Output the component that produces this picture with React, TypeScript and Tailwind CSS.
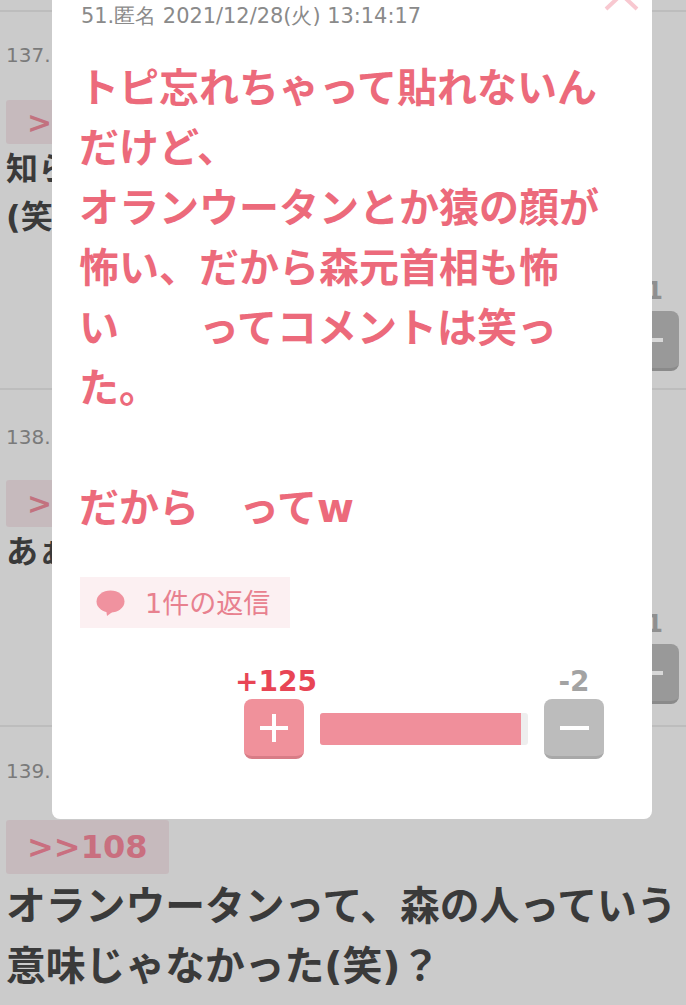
import React from "react";

const jp = "font-['DejaVu_Sans','Noto_Sans_CJK_JP','Noto_Sans_CJK_SC',sans-serif]";
const dv = "font-['DejaVu_Sans',sans-serif]";

function VoteBtn() {
  return (
    <div className="flex flex-col items-end pr-[7px]">
      <div className={`${dv} mb-[6px] mr-[16px] text-[24px] leading-[28px] font-bold text-[#8f8f8f]`}>1</div>
      <div className="w-[60px] h-[60px] rounded-[8px] bg-[#999999] border-b-[3px] border-[#8a8a8a] flex items-center justify-center">
        <div className="w-[28px] h-[4px] bg-[#d8d8d8]" />
      </div>
    </div>
  );
}

function Row137() {
  return (
    <div className="h-[378px] border-t-2 border-[#bdbdbd] mt-[10px] pt-[32px] relative">
      <div className={`${dv} pl-[6px] text-[20px] leading-[22px] text-[#7a7a7a]`}>137.</div>
      <div className="mt-[34px] ml-[6px] w-[160px] h-[44px] rounded-[3px] bg-[#c6babd] pl-[21px] flex items-center">
        <span className={`${dv} text-[30px] font-bold text-[#c2727f]`}>&gt;&gt;</span>
      </div>
      <div className={`${jp} pl-[6px] mt-[1px] text-[32px] leading-[48px] font-bold text-[#3a3a3a]`}>
        <div>知ら</div>
        <div>(笑</div>
      </div>
      <div className="mt-[36px]">
        <VoteBtn />
      </div>
    </div>
  );
}

function Row138() {
  return (
    <div className="h-[337px] border-t-2 border-[#bdbdbd] pt-[36px]">
      <div className={`${dv} pl-[6px] text-[20px] leading-[22px] text-[#7a7a7a]`}>138.</div>
      <div className="mt-[32px] ml-[6px] w-[160px] h-[47px] rounded-[3px] bg-[#c6babd] pl-[21px] flex items-center">
        <span className={`${dv} text-[30px] font-bold text-[#c2727f]`}>&gt;&gt;</span>
      </div>
      <div className={`${jp} pl-[6px] mt-[2px] text-[32px] leading-[46px] font-bold text-[#3a3a3a]`}>あぁ</div>
      <div className="mt-[35px]">
        <VoteBtn />
      </div>
    </div>
  );
}

function Row139() {
  return (
    <div className="border-t-2 border-[#bdbdbd] pt-[33px]">
      <div className={`${dv} pl-[6px] text-[20px] leading-[22px] text-[#7a7a7a]`}>139.</div>
      <div className="mt-[38px] ml-[6px] w-[163px] h-[54px] rounded-[3px] bg-[#c6babd] pl-[21px] flex items-center">
        <span className={`${dv} text-[32px] font-bold text-[#c96f7f]`}>&gt;&gt;108</span>
      </div>
      <div className={`${jp} pl-[6px] mt-[2px] text-[39.8px] leading-[60px] font-bold text-[#3a3a3a] whitespace-nowrap`}>
        <div>オランウータンって、森の人っていう</div>
        <div>意味じゃなかった(笑)？</div>
      </div>
    </div>
  );
}

function Modal() {
  const lines = [
    "トピ忘れちゃって貼れないん",
    "だけど、",
    "オランウータンとか猿の顔が",
    "怖い、だから森元首相も怖",
    "い\u3000\u3000ってコメントは笑っ",
    "た。",
    "\u00a0",
    "だから\u3000ってw",
  ];
  return (
    <div className="absolute left-[52px] top-[-20px] w-[600px] h-[839px] bg-white rounded-[8px] pl-[29px] pt-[21px]">
      <svg className="absolute left-[552px] top-[0px]" width="36" height="34" viewBox="0 0 36 34" fill="none">
        <path d="M2 0 L33 29 M33 0 L2 29" stroke="#f8c8d0" strokeWidth="4" />
      </svg>
      <div className={`${dv} text-[20.9px] leading-[30px] text-[#8a8a8a] whitespace-nowrap`}>51.匿名 2021/12/28(火) 13:14:17</div>
      <div className={`${jp} mt-[27px] -ml-[2px] text-[40px] leading-[60px] font-bold text-[#ec6a7b] whitespace-nowrap`}>
        {lines.map((l, i) => (
          <div key={i}>{l}</div>
        ))}
      </div>
      <div className="mt-[39px] -ml-px w-[210px] h-[51px] bg-[#fcf0f2] flex items-center pl-[16px]">
        <svg width="29" height="26" viewBox="0 0 29 26" fill="#f0929f">
          <ellipse cx="14.5" cy="11.5" rx="14" ry="11" />
          <path d="M10 19 L11 26 L19 20 Z" />
        </svg>
        <span className={`${jp} ml-[20px] pt-[3px] text-[27px] leading-[30px] text-[#e8818f]`}>1件の返信</span>
      </div>
      <div className="mt-[37px] pl-[163px] flex items-end">
        <div className="flex flex-col items-center w-[60px]">
          <div className={`${dv} ml-[4px] text-[28px] leading-[34px] font-bold text-[#e84555] whitespace-nowrap`}>+125</div>
          <div className="w-[60px] h-[60px] rounded-[8px] bg-[#f0919b] border-b-[3px] border-[#d87c86] flex items-center justify-center">
            <svg width="28" height="28" viewBox="0 0 28 28" fill="#ffffff">
              <rect x="12" y="0" width="4" height="28" />
              <rect x="0" y="12" width="28" height="4" />
            </svg>
          </div>
        </div>
        <div className="ml-[16px] mb-[14px] w-[208px] h-[32px] bg-[#eeeeee] rounded-[3px] overflow-hidden">
          <div className="w-[201px] h-full bg-[#f08f9b]" />
        </div>
        <div className="ml-[16px] flex flex-col items-center w-[60px]">
          <div className={`${dv} text-[28px] leading-[34px] font-bold text-[#a3a3a3]`}>-2</div>
          <div className="w-[60px] h-[60px] rounded-[8px] bg-[#bcbcbc] border-b-[3px] border-[#a8a8a8] flex items-center justify-center">
            <div className="w-[29px] h-[4px] bg-white" />
          </div>
        </div>
      </div>
    </div>
  );
}

export default function App() {
  return (
    <div className="relative w-[686px] h-[1005px] overflow-hidden bg-[#cbcbcb]">
      <Row137 />
      <Row138 />
      <Row139 />
      <Modal />
    </div>
  );
}
